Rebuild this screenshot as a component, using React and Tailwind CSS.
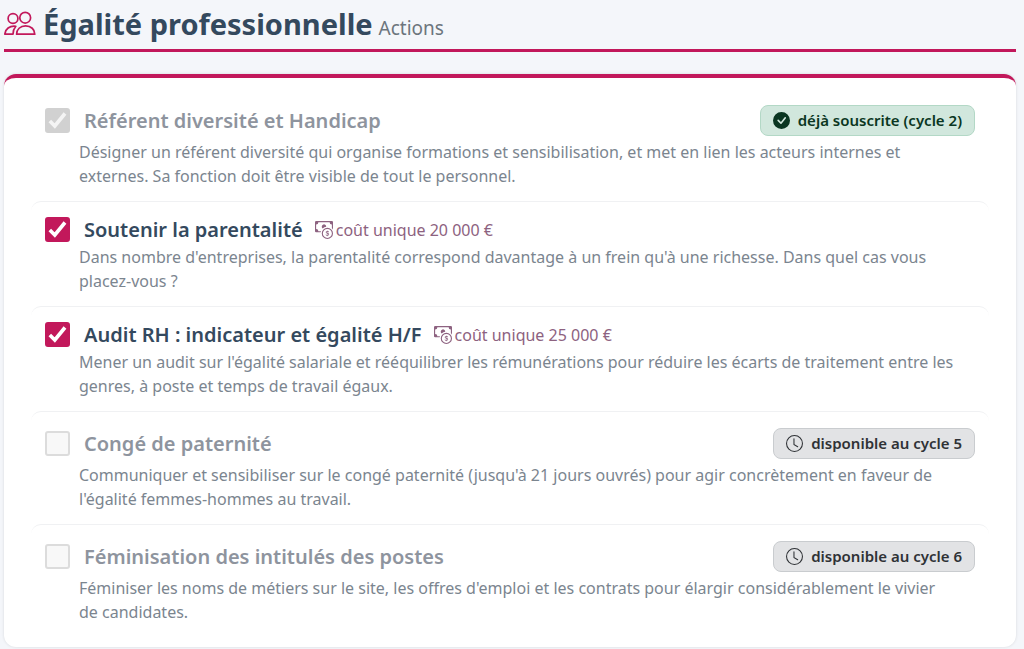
import { BsCashCoin, BsCheckCircleFill, BsClock } from 'react-icons/bs';

const actions = [
    {
        id: 'referent',
        title: 'Référent diversité et Handicap',
        description: "Désigner un référent diversité qui organise formations et sensibilisation, et met en lien les acteurs internes et externes. Sa fonction doit être visible de tout le personnel.",
        checked: true,
        disabled: true,
        subscribed: 'déjà souscrite (cycle 2)',
    },
    {
        id: 'parentalite',
        title: 'Soutenir la parentalité',
        description: "Dans nombre d'entreprises, la parentalité correspond davantage à un frein qu'à une richesse. Dans quel cas vous placez-vous ?",
        checked: true,
        cost: 'coût unique 20 000 €',
    },
    {
        id: 'audit',
        title: 'Audit RH : indicateur et égalité H/F',
        description: "Mener un audit sur l'égalité salariale et rééquilibrer les rémunérations pour réduire les écarts de traitement entre les genres, à poste et temps de travail égaux.",
        checked: true,
        cost: 'coût unique 25 000 €',
    },
    {
        id: 'paternite',
        title: 'Congé de paternité',
        description: "Communiquer et sensibiliser sur le congé paternité (jusqu'à 21 jours ouvrés) pour agir concrètement en faveur de l'égalité femmes-hommes au travail.",
        disabled: true,
        available: 'disponible au cycle 5',
    },
    {
        id: 'feminisation',
        title: 'Féminisation des intitulés des postes',
        description: "Féminiser les noms de métiers sur le site, les offres d'emploi et les contrats pour élargir considérablement le vivier de candidates.",
        disabled: true,
        available: 'disponible au cycle 6',
    },
];

const PeopleIcon = () => (
    <svg viewBox="0 0 32 26" className="w-8 h-[26px] shrink-0" fill="none" stroke="#c2185b" strokeWidth="1.7" strokeLinejoin="round" aria-hidden="true">
        <circle cx="9" cy="7.5" r="4.9" />
        <circle cx="21.2" cy="6.7" r="5.4" />
        <path d="M12.6 23.2c0-4.8 3.6-8.3 9-8.3s9.2 3.5 9.2 8.3z" />
        <path d="M11.8 15.3c-6.2-.8-10.6 2.8-11 7.9h8.2c.1-3.1 1-5.8 2.8-7.900z" />
    </svg>
);

// Case à cocher native, la coche est dessinée par-dessus
const ActionCheckbox = ({ id, checked, disabled }) => (
    <span className="relative w-[25px] h-[25px] shrink-0">
        <input
            id={id}
            type="checkbox"
            defaultChecked={checked}
            disabled={disabled}
            className="peer block appearance-none w-[25px] h-[25px] rounded-[3px] border-2 border-[#c2185b] bg-white checked:bg-[#c2185b] disabled:border-[#dcdcdc] disabled:bg-[#f8f8f8] disabled:checked:border-[#d1d1d1] disabled:checked:bg-[#d1d1d1]"
        />
        <svg viewBox="0 0 25 25" className="absolute inset-0 hidden peer-checked:block pointer-events-none text-white peer-disabled:text-[#f4f4f4]" fill="none" stroke="currentColor" strokeWidth="3.6" aria-hidden="true">
            <path d="M4.8 13l5 5L20 5.5" />
        </svg>
    </span>
);

const Badge = ({ icon: Icon, className, children }) => (
    <span className={`ml-auto my-1 h-[31px] flex items-center gap-2 px-3 rounded-lg border font-semibold text-[15px] whitespace-nowrap ${className}`}>
        <Icon size={17} />
        {children}
    </span>
);

const ActionRow = ({ action }) => (
    <li className="border-t border-[#f0f1f3] first:border-transparent rounded-[10px] pt-3 pb-[13px] px-[14px]">
        <div className="flex items-center min-h-[31px]">
            <ActionCheckbox id={action.id} checked={action.checked} disabled={action.disabled} />
            <label htmlFor={action.id} className={`ml-[14px] text-xl leading-7 font-semibold ${action.disabled ? 'text-[#8e949e]' : 'text-[#34495e]'}`}>
                {action.title}
            </label>
            {action.cost && (
                <span className="ml-3 flex items-center gap-[3px] text-base text-[#8d6280]">
                    <BsCashCoin size={18} />
                    {action.cost}
                </span>
            )}
            {action.subscribed && (
                <Badge icon={BsCheckCircleFill} className="bg-[#d1e7dd] border-[#b3d8c6] text-[#0a3622]">{action.subscribed}</Badge>
            )}
            {action.available && (
                <Badge icon={BsClock} className="bg-[#e2e3e5] border-[#c9cccf] text-[#2f3236]">{action.available}</Badge>
            )}
        </div>
        <p className="pl-[34px] pr-5 text-base leading-6 text-[#7b858f]">{action.description}</p>
    </li>
);

export default function App() {
    return (
        <main className="min-h-screen bg-[#f4f6fa] pl-1 pr-2 font-['Noto_Sans',sans-serif]">
            <header className="flex items-center h-[52px] pb-0.5 border-b-3 border-[#c2185b]">
                <PeopleIcon />
                <div className="ml-[7px] flex items-baseline gap-1.5">
                    <h1 className="text-[29px] leading-10 font-bold text-[#34495e]">Égalité professionnelle</h1>
                    <span className="text-[19px] text-[#6c757d]">Actions</span>
                </div>
            </header>
            <section className="mt-[22px] bg-white border-t-4 border-[#c2185b] rounded-xl shadow-[0_0_3px_rgba(0,0,0,0.12)] py-[10px] px-[27px]">
                <ul>
                    {actions.map((action) => <ActionRow key={action.id} action={action} />)}
                </ul>
            </section>
        </main>
    );
}
